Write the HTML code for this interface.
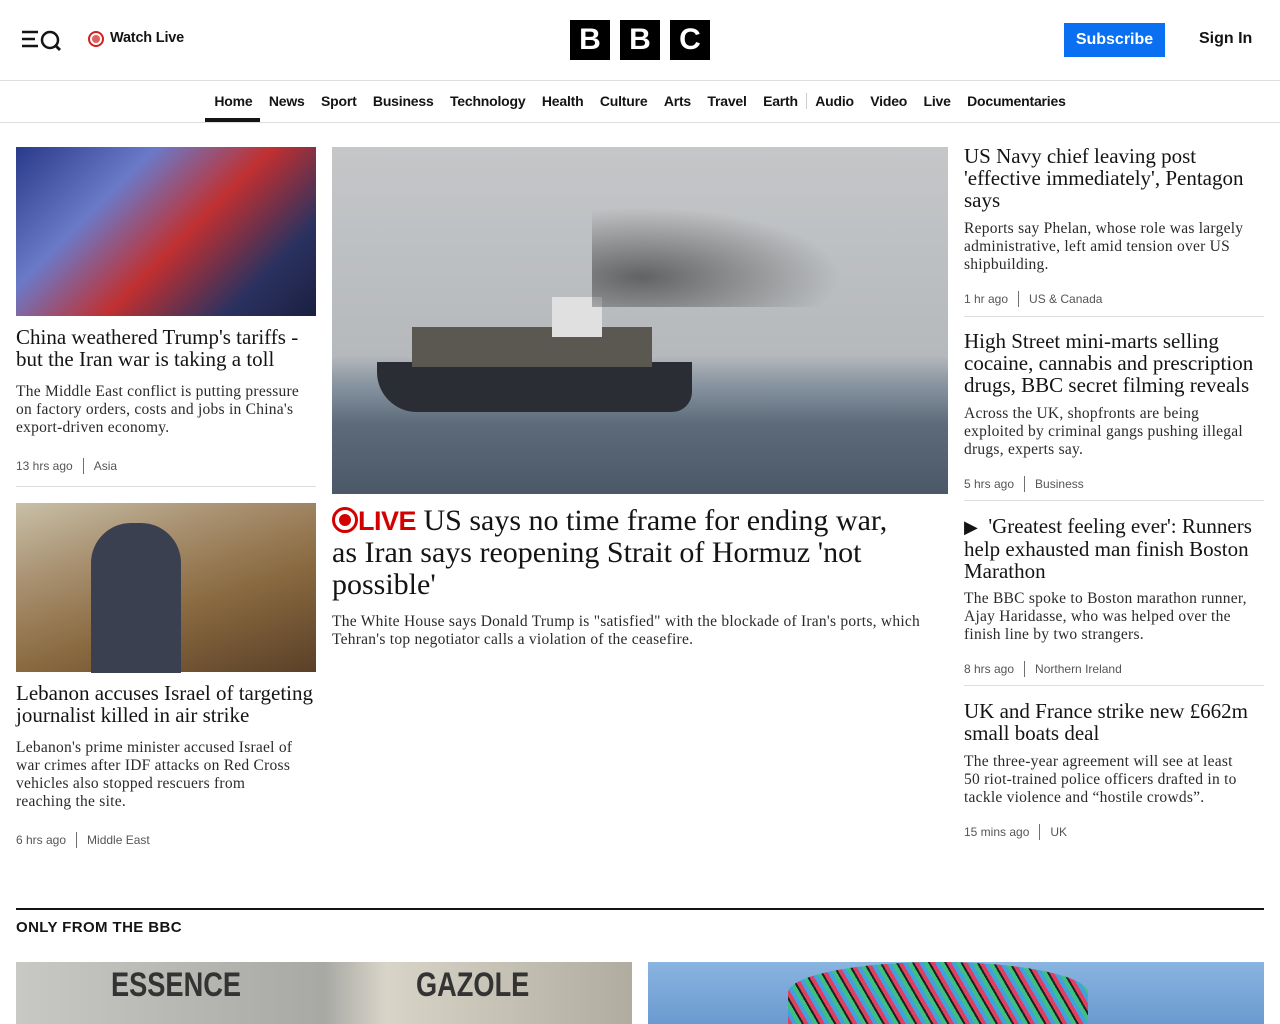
<!DOCTYPE html>
<html><head><meta charset="utf-8"><style>
*{margin:0;padding:0;box-sizing:border-box}
body{width:1280px;height:1024px;overflow:hidden;background:#fff;color:#141414;font-family:"Liberation Sans",sans-serif;position:relative}
.a{position:absolute}
.h{font-family:"Liberation Serif",serif;font-size:21px;line-height:22px;color:#141414;white-space:nowrap}
.d{font-family:"Liberation Serif",serif;font-size:15.5px;line-height:18px;color:#2a2a2a;white-space:nowrap;letter-spacing:0.25px}
.m{font-size:12px;color:#545658;display:flex;align-items:center}
.m i{display:inline-block;width:1px;height:16px;background:#6e6e73;margin:0 10px}
.nav{position:absolute;top:93px;left:0;width:1280px;display:flex;justify-content:center;font-size:14px;font-weight:bold;letter-spacing:-0.2px}
.nav span{padding:0 8.2px}
.hr{position:absolute;height:1px;background:#ddd}
</style></head><body>
<svg class="a" style="left:21px;top:29px" width="42" height="22" viewBox="0 0 42 22"><path d="M1 3h16M1 10h13M1 17h16" stroke="#141414" stroke-width="2.5"/><circle cx="29" cy="11" r="8" fill="none" stroke="#141414" stroke-width="2.5"/><path d="M34 16l5 5" stroke="#141414" stroke-width="2.8"/></svg>
<div class="a" style="left:88px;top:31px;width:16px;height:16px;border-radius:50%;border:2px solid #d42020;background:#fff"><div style="margin:2px;width:8px;height:8px;border-radius:50%;background:#e06060"></div></div>
<div class="a" style="left:110px;top:30px;font-size:14.5px;font-weight:bold;letter-spacing:-0.2px">Watch Live</div>
<div class="a" style="left:570px;top:20px;display:flex;gap:10px">
<div style="width:40px;height:40px;background:#000;color:#fff;font-weight:bold;font-size:30px;text-align:center;line-height:40px">B</div>
<div style="width:40px;height:40px;background:#000;color:#fff;font-weight:bold;font-size:30px;text-align:center;line-height:40px">B</div>
<div style="width:40px;height:40px;background:#000;color:#fff;font-weight:bold;font-size:30px;text-align:center;line-height:40px">C</div></div>
<div class="a" style="left:1064px;top:23px;width:101px;height:34px;background:#0a6ff0;color:#fff;font-weight:bold;font-size:16px;text-align:center;line-height:34px">Subscribe</div>
<div class="a" style="left:1199px;top:30px;font-size:16px;font-weight:bold">Sign In</div>
<div class="hr" style="top:80px;left:0;width:1280px"></div>
<div class="nav"><span>Home</span><span>News</span><span>Sport</span><span>Business</span><span>Technology</span><span>Health</span><span>Culture</span><span>Arts</span><span>Travel</span><span>Earth</span><span style="border-left:1px solid #ccc">Audio</span><span>Video</span><span>Live</span><span>Documentaries</span></div>
<div class="a" style="left:205px;top:118px;width:55px;height:4px;background:#141414"></div>
<div class="hr" style="top:122px;left:0;width:1280px"></div>

<div class="a" style="left:16px;top:147px;width:300px;height:169px;background:linear-gradient(135deg,#2a3a8a 0%,#6a7ac8 30%,#c03030 55%,#2b3260 80%,#1a1f40)"></div>
<div class="a h" style="left:16px;top:326px">China weathered Trump's tariffs -<br>but the Iran war is taking a toll</div>
<div class="a d" style="left:16px;top:383px">The Middle East conflict is putting pressure<br>on factory orders, costs and jobs in China's<br>export-driven economy.</div>
<div class="a m" style="left:16px;top:458px">13 hrs ago<i></i>Asia</div>
<div class="hr" style="top:486px;left:16px;width:300px"></div>
<div class="a" style="left:16px;top:503px;width:300px;height:169px;background:linear-gradient(160deg,#c8c0a8 0%,#a89070 30%,#8a6a40 60%,#5a4028 100%)"><div style="position:absolute;left:75px;top:20px;width:90px;height:150px;background:#3a4050;border-radius:40px 40px 0 0"></div></div>
<div class="a h" style="left:16px;top:682px">Lebanon accuses Israel of targeting<br>journalist killed in air strike</div>
<div class="a d" style="left:16px;top:739px">Lebanon's prime minister accused Israel of<br>war crimes after IDF attacks on Red Cross<br>vehicles also stopped rescuers from<br>reaching the site.</div>
<div class="a m" style="left:16px;top:832px">6 hrs ago<i></i>Middle East</div>

<div class="a" style="left:332px;top:147px;width:616px;height:347px;background:linear-gradient(180deg,#c4c6c8 0%,#b6b9bc 60%,#8a96a2 68%,#5c6a7a 80%,#4a5868 100%)">
<div style="position:absolute;left:45px;top:215px;width:315px;height:50px;background:#2a2e34;border-radius:0 0 20px 40px"></div>
<div style="position:absolute;left:80px;top:180px;width:240px;height:40px;background:#5a5850"></div>
<div style="position:absolute;left:220px;top:150px;width:50px;height:40px;background:#e0e0e0"></div>
<div style="position:absolute;left:260px;top:60px;width:250px;height:100px;background:radial-gradient(ellipse at 20% 70%,rgba(60,60,60,.7),rgba(120,120,120,0) 70%)"></div></div>
<div class="a" style="left:332px;top:505px;font-family:'Liberation Serif',serif;font-size:30px;line-height:32px;white-space:nowrap"><span style="display:inline-block;width:26px;height:26px;border:3px solid #d40000;border-radius:50%;vertical-align:-3px;position:relative"><span style="position:absolute;left:4px;top:4px;width:12px;height:12px;border-radius:50%;background:#d40000"></span></span><span style="color:#d40000;font-family:'Liberation Sans',sans-serif;font-weight:bold;font-size:27px;letter-spacing:-0.5px">LIVE</span> US says no time frame for ending war,<br>as Iran says reopening Strait of Hormuz 'not<br>possible'</div>
<div class="a d" style="left:332px;top:613px">The White House says Donald Trump is "satisfied" with the blockade of Iran's ports, which<br>Tehran's top negotiator calls a violation of the ceasefire.</div>

<div class="a h" style="left:964px;top:145px">US Navy chief leaving post<br>'effective immediately', Pentagon<br>says</div>
<div class="a d" style="left:964px;top:220px">Reports say Phelan, whose role was largely<br>administrative, left amid tension over US<br>shipbuilding.</div>
<div class="a m" style="left:964px;top:291px">1 hr ago<i></i>US &amp; Canada</div>
<div class="hr" style="top:316px;left:964px;width:300px"></div>
<div class="a h" style="left:964px;top:330px">High Street mini-marts selling<br>cocaine, cannabis and prescription<br>drugs, BBC secret filming reveals</div>
<div class="a d" style="left:964px;top:405px">Across the UK, shopfronts are being<br>exploited by criminal gangs pushing illegal<br>drugs, experts say.</div>
<div class="a m" style="left:964px;top:476px">5 hrs ago<i></i>Business</div>
<div class="hr" style="top:500px;left:964px;width:300px"></div>
<div class="a h" style="left:964px;top:515px"><span style="font-size:18px">&#9654;</span>&nbsp; 'Greatest feeling ever': Runners<br>help exhausted man finish Boston<br>Marathon</div>
<div class="a d" style="left:964px;top:590px">The BBC spoke to Boston marathon runner,<br>Ajay Haridasse, who was helped over the<br>finish line by two strangers.</div>
<div class="a m" style="left:964px;top:661px">8 hrs ago<i></i>Northern Ireland</div>
<div class="hr" style="top:685px;left:964px;width:300px"></div>
<div class="a h" style="left:964px;top:700px">UK and France strike new £662m<br>small boats deal</div>
<div class="a d" style="left:964px;top:753px">The three-year agreement will see at least<br>50 riot-trained police officers drafted in to<br>tackle violence and “hostile crowds”.</div>
<div class="a m" style="left:964px;top:824px">15 mins ago<i></i>UK</div>

<div class="a" style="left:16px;top:908px;width:1248px;height:2px;background:#141414"></div>
<div class="a" style="left:16px;top:919px;font-size:15px;font-weight:bold;letter-spacing:0.4px">ONLY FROM THE BBC</div>
<div class="a" style="left:16px;top:962px;width:616px;height:62px;background:linear-gradient(90deg,#c8c8c4,#a8a8a4 50%,#d8d4c8 60%,#b0aca0)"><span style="position:absolute;left:95px;top:4px;font-weight:bold;font-size:34px;color:#333;transform:scaleX(.8);transform-origin:left">ESSENCE</span><span style="position:absolute;left:400px;top:4px;font-weight:bold;font-size:34px;color:#333;transform:scaleX(.8);transform-origin:left">GAZOLE</span></div>
<div class="a" style="left:648px;top:962px;width:616px;height:62px;background:linear-gradient(180deg,#8ab4e0,#6a9ad0)"><div style="position:absolute;left:140px;top:0;width:300px;height:62px;border-radius:50% 50% 0 0;background:repeating-linear-gradient(60deg,#e04060 0 4px,#40a0e0 4px 8px,#40c080 8px 12px,#202020 12px 14px)"></div></div>
</body></html>
